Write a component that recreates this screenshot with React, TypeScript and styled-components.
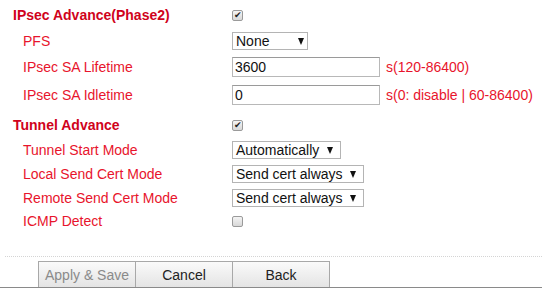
import React from "react";
import styled, { createGlobalStyle } from "styled-components";

const GlobalStyle = createGlobalStyle`
  html, body {
    margin: 0;
    padding: 0;
    background: #ffffff;
  }
  body {
    font-family: "Liberation Sans", Arial, sans-serif;
    font-size: 14px;
  }
`;

const Page = () => {
  return (
    <Container>
      <GlobalStyle />
      <Form>
        <Row h={26} top={2}>
          <SectionTitle>IPsec Advance(Phase2)</SectionTitle>
          <Check checked />
        </Row>
        <Row h={25}>
          <Label>PFS</Label>
          <Select w={76} arrowGap={3}>
            <span>None</span>
            <Arrow />
          </Select>
        </Row>
        <Row h={28}>
          <Label>IPsec SA Lifetime</Label>
          <Field>
            <TextBox>3600</TextBox>
            <Hint>s(120-86400)</Hint>
          </Field>
        </Row>
        <Row h={28}>
          <Label>IPsec SA Idletime</Label>
          <Field>
            <TextBox>0</TextBox>
            <Hint>s(0: disable | 60-86400)</Hint>
          </Field>
        </Row>

        <Row h={26} top={3}>
          <SectionTitle>Tunnel Advance</SectionTitle>
          <Check checked />
        </Row>
        <Row h={24}>
          <Label>Tunnel Start Mode</Label>
          <Select w={109}>
            <span>Automatically</span>
            <Arrow />
          </Select>
        </Row>
        <Row h={24}>
          <Label>Local Send Cert Mode</Label>
          <Select w={132}>
            <span>Send cert always</span>
            <Arrow />
          </Select>
        </Row>
        <Row h={24}>
          <Label>Remote Send Cert Mode</Label>
          <Select w={132}>
            <span>Send cert always</span>
            <Arrow />
          </Select>
        </Row>
        <Row h={22}>
          <Label>ICMP Detect</Label>
          <Check />
        </Row>
      </Form>

      <Footer>
        <Button disabled>Apply &amp; Save</Button>
        <Button>Cancel</Button>
        <Button>Back</Button>
      </Footer>
    </Container>
  );
};

export default function App() {
  return <Page />;
}

const Container = styled.div`
  width: 542px;
  height: 288px;
  display: flex;
  flex-direction: column;
  overflow: hidden;
  border-bottom: 1px solid #8a8a8a;
  box-sizing: border-box;
`;

const Form = styled.div`
  display: flex;
  flex-direction: column;
`;

const Row = styled.div<{ h: number; top?: number }>`
  display: grid;
  grid-template-columns: 232px 1fr;
  align-items: center;
  height: ${(p) => p.h}px;
  margin-top: ${(p) => p.top || 0}px;
`;

const SectionTitle = styled.div`
  padding-left: 13px;
  color: #d0021b;
  font-weight: bold;
  font-size: 14px;
`;

const Label = styled.div`
  padding-left: 23px;
  color: #e8142c;
  font-size: 14px;
`;

const Check = styled.span<{ checked?: boolean }>`
  position: relative;
  display: block;
  width: 11px;
  height: 11px;
  border: 1px solid #9a9a9a;
  border-radius: 2px;
  box-sizing: border-box;
  background: linear-gradient(#f4f4f4, #d8d8d8);
  &::after {
    content: "${(p) => (p.checked ? "✔" : "")}";
    position: absolute;
    left: 1px;
    top: -2px;
    font-size: 9px;
    line-height: 12px;
    color: #222;
  }
`;

const Select = styled.div<{ w: number; arrowGap?: number }>`
  display: flex;
  align-items: center;
  justify-content: space-between;
  width: ${(p) => p.w}px;
  height: 18px;
  box-sizing: border-box;
  border: 1px solid #b4b4b4;
  background: #fff;
  padding: 0 ${(p) => p.arrowGap ?? 7}px 0 3px;
  color: #111;
  font-size: 14px;
`;

const Arrow = styled.span`
  width: 0;
  height: 0;
  border-left: 3.5px solid transparent;
  border-right: 3.5px solid transparent;
  border-top: 7px solid #111;
  margin-top: 1px;
`;

const Field = styled.div`
  display: flex;
  align-items: center;
  gap: 6px;
`;

const TextBox = styled.div`
  width: 148px;
  height: 20px;
  box-sizing: border-box;
  border: 1px solid #b8b8b8;
  border-top-color: #9a9a9a;
  padding: 0 2px;
  line-height: 18px;
  color: #111;
  font-size: 14px;
`;

const Hint = styled.span`
  color: #e8142c;
  font-size: 14px;
`;

const Footer = styled.div`
  margin-top: auto;
  margin-left: 5px;
  border-top: 1px dotted #d4d4d4;
  padding: 4px 0 0 33px;
  height: 31px;
  box-sizing: border-box;
  display: flex;
  align-items: flex-start;
`;

const Button = styled.button`
  width: 98px;
  height: 26px;
  margin: 0 -1px 0 0;
  border: 1px solid #a8a8a8;
  border-bottom: none;
  background: linear-gradient(#fafafa, #e4e4e4);
  font-family: "Liberation Sans", Arial, sans-serif;
  font-size: 14px;
  color: #222;
  padding: 0;
  &:disabled {
    color: #8a8a8a;
  }
`;
